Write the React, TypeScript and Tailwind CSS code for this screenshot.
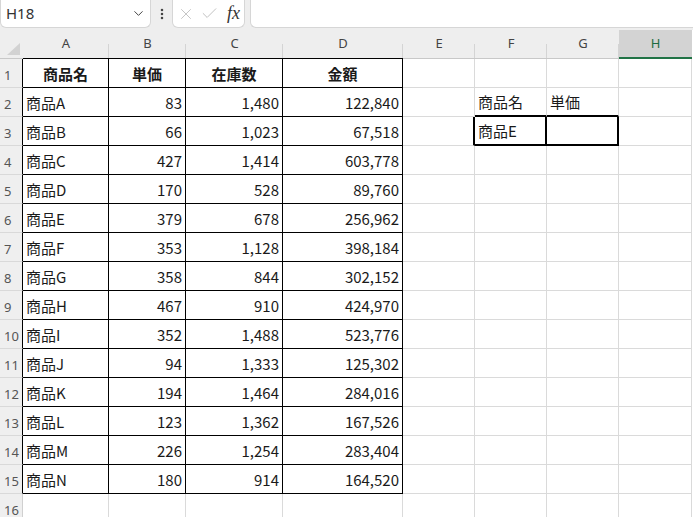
import React from "react";
import { ChevronDown, EllipsisVertical, X, Check } from "lucide-react";

const names = ["A","B","C","D","E","F","G","H","I","J","K","L","M","N"];
const price = [83,66,427,170,379,353,358,467,352,94,194,123,226,180];
const stock = ["1,480","1,023","1,414","528","678","1,128","844","910","1,488","1,333","1,464","1,362","1,254","914"];
const amount = ["122,840","67,518","603,778","89,760","256,962","398,184","302,152","424,970","523,776","125,302","284,016","167,526","283,404","164,520"];
const cols = ["A","B","C","D","E","F","G","H"];

const font = { fontFamily: '"Noto Sans CJK JP", "Noto Sans", sans-serif' };

function Cell({ children, className = "" }: { children?: React.ReactNode; className?: string }) {
  return (
    <div className={"h-[29px] flex items-center pt-[2px] px-[3px] text-[15px] text-[#1a1a1a] whitespace-nowrap overflow-hidden border-r border-b " + className}>
      {children}
    </div>
  );
}

export default function App() {
  const rows: React.ReactNode[] = [];
  for (let r = 1; r <= 16; r++) {
    const inTable = r <= 15;
    rows.push(
      <div
        key={"rh" + r}
        className={"h-[29px] flex items-center pl-[4px] pt-[3px] text-[13px] leading-[16px] text-[#555] bg-[#efefef] border-b border-b-[#d9d9d9] border-r " + (inTable ? "border-r-black" : "border-r-[#d0d0d0]")}
        style={{ fontFamily: '"Noto Sans", sans-serif' }}
      >
        {r}
      </div>
    );
    if (r === 1) {
      ["商品名", "単価", "在庫数", "金額"].map((t, i) =>
        rows.push(
          <Cell key={"h" + i} className="justify-center font-bold border-black">
            {t}
          </Cell>
        )
      );
    } else if (inTable) {
      const i = r - 2;
      rows.push(<Cell key={"a" + r} className="border-black">{"商品" + names[i]}</Cell>);
      rows.push(<Cell key={"b" + r} className="justify-end border-black">{price[i]}</Cell>);
      rows.push(<Cell key={"c" + r} className="justify-end border-black">{stock[i]}</Cell>);
      rows.push(<Cell key={"d" + r} className="justify-end border-black">{amount[i]}</Cell>);
    } else {
      for (let k = 0; k < 4; k++) rows.push(<Cell key={"x" + r + k} className="border-[#dadada]" />);
    }
    // E
    rows.push(
      <Cell key={"e" + r} className={r === 3 ? "border-b-[#dadada] border-r-2 border-r-black" : "border-[#dadada]"} />
    );
    // F, G
    if (r === 2) {
      rows.push(<Cell key={"f" + r} className="border-r-[#dadada] border-b-2 border-b-black">商品名</Cell>);
      rows.push(<Cell key={"g" + r} className="border-r-[#dadada] border-b-2 border-b-black">単価</Cell>);
    } else if (r === 3) {
      rows.push(<Cell key={"f" + r} className="pt-0 border-r-2 border-b-2 border-black">商品E</Cell>);
      rows.push(<Cell key={"g" + r} className="border-r-2 border-b-2 border-black" />);
    } else {
      rows.push(<Cell key={"f" + r} className="border-[#dadada]" />);
      rows.push(<Cell key={"g" + r} className="border-[#dadada]" />);
    }
    rows.push(<Cell key={"hh" + r} className="border-[#dadada]" />);
  }

  return (
    <div className="w-[693px] h-[517px] overflow-hidden bg-white" style={font}>
      {/* formula bar */}
      <div className="h-[30px] bg-[#eeeeee] flex items-start">
        <div className="w-[151px] h-[28px] bg-white border border-t-0 border-[#d6d6d6] rounded-b-md flex items-center justify-between pl-[5px] pr-[4px]">
          <span className="text-[15px] text-[#333]" style={{ fontFamily: '"Noto Sans", sans-serif' }}>H18</span>
          <ChevronDown size={15} strokeWidth={1.6} className="text-[#444]" />
        </div>
        <div className="w-[21px] h-[28px] flex items-center justify-center">
          <EllipsisVertical size={14} strokeWidth={2.4} className="text-[#444]" />
        </div>
        <div className="w-[73px] h-[28px] bg-white border border-t-0 border-[#d6d6d6] rounded-b-md flex items-center pl-[4px] gap-[5px]">
          <X size={18} strokeWidth={1.1} className="text-[#b8b8b8]" />
          <Check size={19} strokeWidth={1.1} className="text-[#b8b8b8]" />
          <span className="ml-[3px] text-[18px] italic text-[#333]" style={{ fontFamily: '"Liberation Serif", serif' }}>fx</span>
        </div>
        <div className="flex-1 ml-[5px] h-[28px] bg-white border border-t-0 border-r-0 border-[#d6d6d6] rounded-bl-md" />
      </div>

      <div className="grid grid-cols-[23px_86px_77px_97px_120px_72px_72px_72px_73px]">
        {/* corner */}
        <div className="h-[29px] bg-[#eeeeee] border-b border-[#c8c8c8] flex items-end justify-end pr-[3px] pb-[3px]">
          <svg width="13" height="12" viewBox="0 0 13 12">
            <polygon points="13,0 13,12 0,12" fill="#d2d2d2" />
          </svg>
        </div>
        {cols.map((c, i) => {
          const sel = c === "H";
          const inT = i < 4;
          return (
            <div
              key={c}
              className={
                "h-[29px] relative flex items-center justify-center text-[13px] " +
                (sel
                  ? "bg-[#d3d3d3] text-[#1e6c41] border-b-2 border-[#217346]"
                  : "bg-[#eeeeee] text-[#444] border-b " + (inT ? "border-black" : "border-[#c8c8c8]"))
              }
              style={{ fontFamily: '"Noto Sans", sans-serif' }}
            >
              {c}
              {!sel && <div className="absolute right-0 bottom-0 h-[14px] w-px bg-[#d4d4d4]" />}
            </div>
          );
        })}
        {rows}
      </div>
    </div>
  );
}
